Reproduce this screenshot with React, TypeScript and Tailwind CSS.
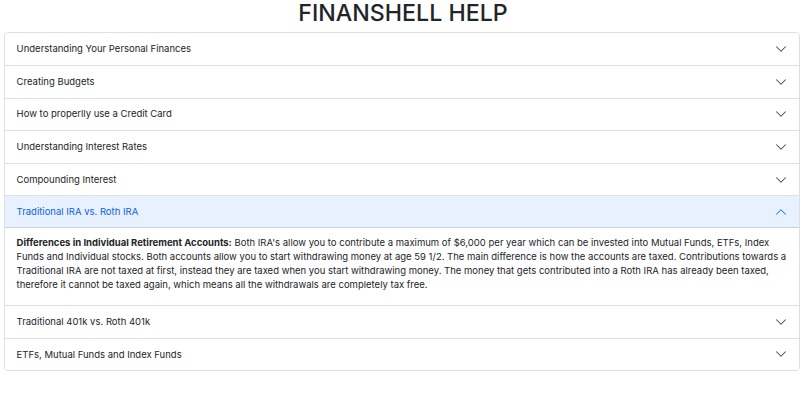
import React, { useState } from 'react';

const faqs = [
  { title: 'Understanding Your Personal Finances', body: null },
  { title: 'Creating Budgets', body: null },
  { title: 'How to properlly use a Credit Card', body: null },
  { title: 'Understanding Interest Rates', body: null },
  { title: 'Compounding Interest', body: null },
  {
    title: 'Traditional IRA vs. Roth IRA',
    body: (
      <>
        <strong className="font-bold">Differences in Individual Retirement Accounts:</strong> Both IRA's allow you to
        contribute a maximum of $6,000 per year which can be invested into Mutual Funds, ETFs, Index Funds and
        Individual stocks. Both accounts allow you to start withdrawing money at age 59 1/2. The main difference is how
        the accounts are taxed. Contributions towards a Traditional IRA are not taxed at first, instead they are taxed
        when you start withdrawing money. The money that gets contributed into a Roth IRA has already been taxed,
        therefore it cannot be taxed again, which means all the withdrawals are completely tax free.
      </>
    ),
  },
  { title: 'Traditional 401k vs. Roth 401k', body: null },
  { title: 'ETFs, Mutual Funds and Index Funds', body: null },
];

const Chevron = ({ open }: { open: boolean }) => (
  <svg
    viewBox="0 0 16 16"
    className={`w-[12px] h-[12px] shrink-0 ${open ? 'rotate-180 text-[#0c63e4]' : 'text-[#212529]'}`}
    fill="currentColor"
  >
    <path
      fillRule="evenodd"
      d="M1.646 4.646a.5.5 0 0 1 .708 0L8 10.293l5.646-5.647a.5.5 0 0 1 .708.708l-6 6a.5.5 0 0 1-.708 0l-6-6a.5.5 0 0 1 0-.708z"
    />
  </svg>
);

export default function App() {
  const [open, setOpen] = useState<number | null>(5);

  return (
    <div className="min-h-screen bg-white text-[#212529]" style={{ fontFamily: 'Inter, "Liberation Sans", sans-serif' }}>
      <h1 className="text-center text-[23.2px] leading-[27.8px] font-medium mb-[4.6px]">FINANSHELL HELP</h1>

      <div className="ml-[4px] w-[796px] border border-[#dfdfdf] rounded-[4px] overflow-hidden">
        {faqs.map((item, idx) => {
          const isOpen = open === idx;
          return (
            <div key={idx} className={idx > 0 ? 'border-t border-[#dfdfdf]' : ''}>
              <button
                onClick={() => setOpen(isOpen ? null : idx)}
                className={`w-full h-[31.6px] flex items-center justify-between text-left px-[11.6px] text-[9.5px] leading-[13.9px] ${
                  isOpen ? 'bg-[#e7f1ff] text-[#0c63e4] shadow-[inset_0_-1px_0_rgba(0,0,0,0.125)]' : 'bg-white text-[#212529]'
                }`}
              >
                <span>{item.title}</span>
                <Chevron open={isOpen} />
              </button>
              {isOpen && item.body && (
                <div className="px-[11.6px] pt-[8.5px] pb-[13px] text-[9.5px] leading-[13.9px]">{item.body}</div>
              )}
            </div>
          );
        })}
      </div>
    </div>
  );
}
